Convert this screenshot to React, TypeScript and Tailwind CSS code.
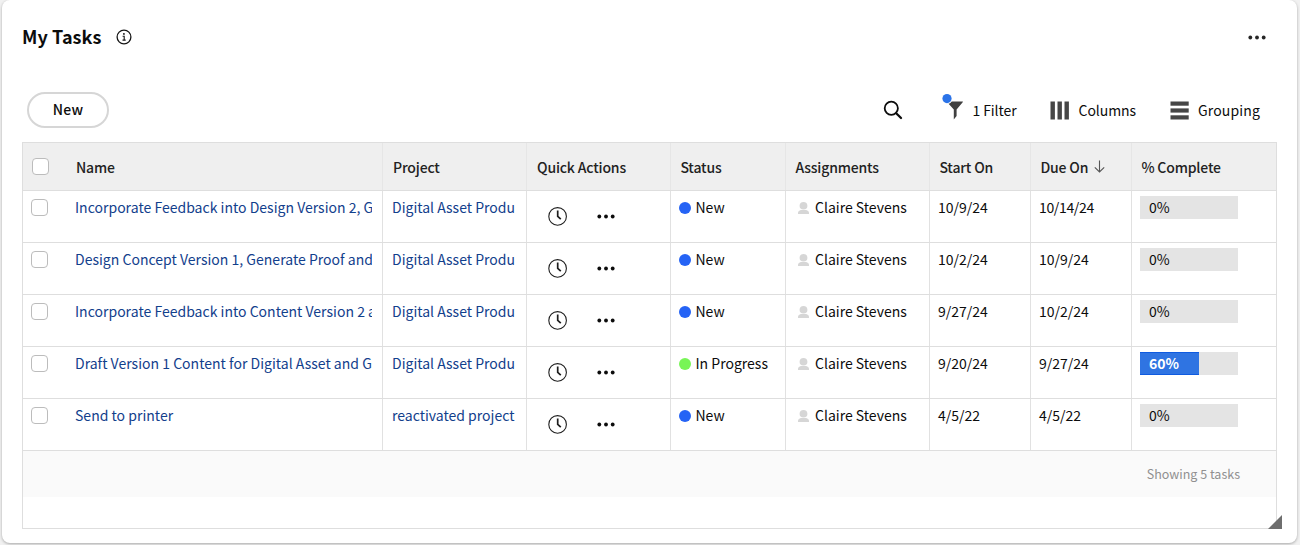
import type { ReactNode } from 'react';

type Task = {
  name: string;
  project: string;
  status: string;
  assignee: string;
  start: string;
  due: string;
  complete: number;
};

const PROJECT = 'Digital Asset Produ';

const tasks: Task[] = [
  { name: 'Incorporate Feedback into Design Version 2, G', project: PROJECT, status: 'New', assignee: 'Claire Stevens', start: '10/9/24', due: '10/14/24', complete: 0 },
  { name: 'Design Concept Version 1, Generate Proof and', project: PROJECT, status: 'New', assignee: 'Claire Stevens', start: '10/2/24', due: '10/9/24', complete: 0 },
  { name: 'Incorporate Feedback into Content Version 2 a', project: PROJECT, status: 'New', assignee: 'Claire Stevens', start: '9/27/24', due: '10/2/24', complete: 0 },
  { name: 'Draft Version 1 Content for Digital Asset and G', project: PROJECT, status: 'In Progress', assignee: 'Claire Stevens', start: '9/20/24', due: '9/27/24', complete: 60 },
  { name: 'Send to printer', project: 'reactivated project', status: 'New', assignee: 'Claire Stevens', start: '4/5/22', due: '4/5/22', complete: 0 },
];

const columns = 'grid grid-cols-[360px_144px_144px_115px_144px_101px_101px_144px]';

function Dots({ className }: { className: string }) {
  return (
    <svg className={className} width="18" height="5" viewBox="0 0 18 5" fill="currentColor">
      <circle cx="2.3" cy="2.5" r="1.9" />
      <circle cx="9" cy="2.5" r="1.9" />
      <circle cx="15.7" cy="2.5" r="1.9" />
    </svg>
  );
}

function InfoIcon() {
  return (
    <svg width="16" height="16" viewBox="0 0 16 16" fill="none" stroke="#161616">
      <circle cx="8" cy="8" r="6.9" strokeWidth="1.3" />
      <circle cx="7.9" cy="4.9" r="0.95" fill="#161616" stroke="none" />
      <path d="M6.6 7.3H8.2V11M6.5 11.1H9.7" strokeWidth="1.1" />
    </svg>
  );
}

function SearchIcon() {
  return (
    <svg width="20" height="20" viewBox="0 0 20 20" fill="none" stroke="#0c0c0c">
      <circle cx="8.3" cy="8.3" r="6.6" strokeWidth="1.8" />
      <path d="M13.2 13.2L18 18" strokeWidth="2.3" strokeLinecap="round" />
    </svg>
  );
}

function FilterIcon() {
  return (
    <svg width="22" height="28" viewBox="0 0 22 28">
      <path d="M5.2 8.4H20.4C21 8.4 21.1 8.8 20.7 9.2L14.6 16.6V23L11.8 26.4V16.6L5.2 9.2Z" fill="#404040" />
      <circle cx="5" cy="5.6" r="5.4" fill="#fff" />
      <circle cx="5" cy="5.6" r="4.6" fill="#2b73e8" />
    </svg>
  );
}

function ColumnsIcon() {
  return (
    <svg width="20" height="19" viewBox="0 0 20 19" fill="#464646">
      <rect x="0.5" y="0.5" width="4.4" height="18" />
      <rect x="7.5" y="0.5" width="4.4" height="18" />
      <rect x="14.5" y="0.5" width="4.4" height="18" />
    </svg>
  );
}

function GroupingIcon() {
  return (
    <svg width="19" height="19" viewBox="0 0 19 19" fill="#464646">
      <rect x="0.5" y="0.5" width="18.2" height="4.2" />
      <rect x="0.5" y="7.4" width="18.2" height="4.2" />
      <rect x="0.5" y="14.3" width="18.2" height="4.2" />
    </svg>
  );
}

function ClockIcon() {
  return (
    <svg width="20" height="20" viewBox="0 0 20 20" fill="none" stroke="#1e1e1e">
      <circle cx="9.6" cy="10.4" r="8.8" strokeWidth="1.1" />
      <path d="M9.7 4.4V10.3L12.8 13.2" strokeWidth="1.7" />
    </svg>
  );
}

function PersonIcon() {
  return (
    <svg width="11" height="12" viewBox="0 0 11 12" fill="#d6d6d6">
      <ellipse cx="5.5" cy="3.8" rx="3.9" ry="3.8" />
      <path d="M0 12V10.8C0 9.3 1.5 8.6 2.8 8.1H8.2C9.5 8.6 11 9.3 11 10.8V12Z" />
    </svg>
  );
}

function Checkbox() {
  return <span className="block size-[17px] shrink-0 rounded-[4px] border border-[#bcbcbc] bg-white" />;
}

function HeadCell({ children }: { children: ReactNode }) {
  return <div className="flex items-center border-r border-[#e6e6e6] pt-px pl-[9.4px]">{children}</div>;
}

function Cell({ children }: { children: ReactNode }) {
  return <div className="flex h-[51px] items-start border-r border-[#e1e1e1] pl-2">{children}</div>;
}

function Row({ task }: { task: Task }) {
  return (
    <div className={columns + ' border-b border-[#dedede] text-[14px] leading-[33px] text-[#0c0c0c]'}>
      <div className="flex h-[51px] items-start border-r border-[#e1e1e1] pr-[10px] pl-2">
        <span className="mt-2">
          <Checkbox />
        </span>
        <span className="ml-[27px] flex-1 overflow-hidden tracking-[0.001em] whitespace-nowrap text-[#12408c]">
          {task.name}
        </span>
      </div>
      <div className="flex h-[51px] items-start border-r border-[#e1e1e1] pl-[9px]">
        <span className="whitespace-nowrap text-[#12408c]">{task.project}</span>
      </div>
      <div className="flex h-[51px] items-center border-r border-[#e1e1e1] pl-[21px] text-[#0c0c0c]">
        <span className="-mt-px">
          <ClockIcon />
        </span>
        <Dots className="ml-[29px]" />
      </div>
      <Cell>
        <span
          className={
            'mt-[11px] mr-1 size-3 shrink-0 rounded-full ' + (task.status === 'New' ? 'bg-[#2563f5]' : 'bg-[#78f556]')
          }
        />
        <span className="pl-[0.5px] whitespace-nowrap">{task.status}</span>
      </Cell>
      <Cell>
        <span className="mt-[11px] mr-[6px] ml-1">
          <PersonIcon />
        </span>
        <span className="whitespace-nowrap">{task.assignee}</span>
      </Cell>
      <Cell>{task.start}</Cell>
      <Cell>
        <span className={task.due.length > 7 ? 'tracking-[-0.025em]' : ''}>{task.due}</span>
      </Cell>
      <div className="h-[51px] pt-[5px] pl-2">
        <div className="grid h-[23px] w-[97.5px] bg-[#e4e4e4] leading-[23px]">
          {task.complete > 0 ? (
            <div
              className="border-y border-[#0f5be0] bg-[#2f74e2] pl-[9px] leading-[21px] font-bold text-white"
              style={{ width: `${task.complete}%` }}
            >
              {task.complete}%
            </div>
          ) : (
            <div className="pl-[9px]">0%</div>
          )}
        </div>
      </div>
    </div>
  );
}

export default function App() {
  return (
    <div className="h-[545px] w-[1300px] overflow-hidden bg-[#f1f1f1] pr-[3px] pl-[2px] font-['Noto_Sans_CJK_SC',sans-serif] text-[#0c0c0c]">
      <div className="flex h-[543px] flex-col rounded-lg bg-white px-5 shadow-[0_1px_3px_rgba(0,0,0,0.3)]">
        <header className="flex h-[74px] items-center justify-between pr-[11px]">
          <div className="flex items-center gap-[14.5px]">
            <h1 className="-mt-0.5 text-[18px] leading-6 font-bold tracking-[0.003em]">My Tasks</h1>
            <InfoIcon />
          </div>
          <Dots className="text-[#262626]" />
        </header>
        <div className="flex h-[68px] items-start justify-between pt-[18px] pr-[17px] pl-[5px]">
          <button className="h-9 w-[82px] rounded-full border-2 border-[#d6d6d6] pb-0.5 text-[14px] leading-[30px] font-medium tracking-[0.02em]">
            New
          </button>
          <div className="flex h-9 items-center text-[14px] tracking-[-0.005em]">
            <SearchIcon />
            <span className="ml-[39px] -mt-[7px]">
              <FilterIcon />
            </span>
            <span className="ml-2">1 Filter</span>
            <span className="ml-[33px]">
              <ColumnsIcon />
            </span>
            <span className="ml-[9px]">Columns</span>
            <span className="ml-[34px]">
              <GroupingIcon />
            </span>
            <span className="ml-[9px] tracking-[0.01em]">Grouping</span>
          </div>
        </div>
        <div className="relative h-[387px] w-[1255px] border border-[#dedede]">
          <div
            className={
              columns +
              ' h-12 border-b border-[#dedede] bg-[#efefef] text-[14px] font-medium tracking-[-0.012em] text-[#222222]'
            }
          >
            <div className="flex items-center gap-[27px] border-r border-[#e6e6e6] pl-[9px]">
              <Checkbox />
              <span className="pt-px">Name</span>
            </div>
            <div className="flex items-center border-r border-[#e6e6e6] pt-px pl-[10px]">Project</div>
            <div className="flex items-center border-r border-[#e6e6e6] pt-px pl-[10px]">Quick Actions</div>
            <HeadCell>Status</HeadCell>
            <HeadCell>Assignments</HeadCell>
            <HeadCell>Start On</HeadCell>
            <HeadCell>
              Due On
              <svg className="-mt-0.5 ml-[6px]" width="11" height="13" viewBox="0 0 11 13" fill="none" stroke="#555">
                <path d="M5.5 0.5V12M0.8 7.3L5.5 12L10.2 7.3" strokeWidth="1.1" />
              </svg>
            </HeadCell>
            <div className="flex items-center pt-px pl-[9.4px]">% Complete</div>
          </div>
          {tasks.map((task) => (
            <Row key={task.name} task={task} />
          ))}
          <div className="flex h-[46px] items-center justify-end bg-[#fafafa] pr-9 text-[12.5px] text-[#909090]">
            Showing 5 tasks
          </div>
          <svg className="absolute -right-[6px] -bottom-px" width="14" height="14" viewBox="0 0 14 14">
            <path d="M14 0V14H0Z" fill="#6e6e6e" />
          </svg>
        </div>
      </div>
    </div>
  );
}
